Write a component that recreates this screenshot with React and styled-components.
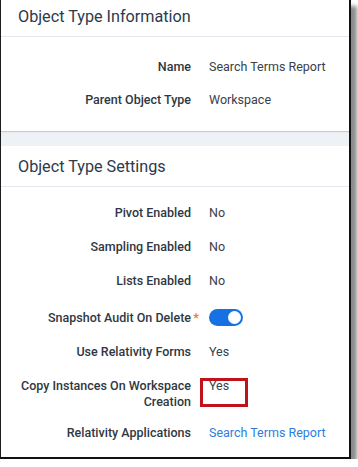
import React from "react";
import styled, { createGlobalStyle } from "styled-components";

const Global = createGlobalStyle`
    body {
        margin: 0;
        background: #ffffff;
        font-family: Roboto, "Liberation Sans", sans-serif;
    }
`;

const Frame = styled.div`
    width: 348px;
    height: 457px;
    display: flex;
    flex-direction: column;
    background: #eef2f6;
    border-left: 1px solid #1c1c1c;
    border-right: 2px solid #111;
    border-bottom: 2px solid #111;
    box-shadow: 6px 6px 4px rgba(0, 0, 0, 0.45);
    overflow: hidden;
`;

const Card = styled.section`
    background: #ffffff;
    display: flex;
    flex-direction: column;
    flex: ${(p) => (p.$grow ? 1 : "none")};
    margin-top: ${(p) => p.$gap || 0}px;
    box-shadow: 0 1px 1px rgba(120, 135, 155, 0.35);
`;

const Header = styled.h2`
    margin: 0;
    height: ${(p) => p.$h}px;
    line-height: ${(p) => p.$h - (p.$lift || 0) * 2}px;
    padding: 0 17px ${(p) => (p.$lift || 0) * 2}px;
    box-sizing: border-box;
    border-bottom: 1px solid #e3e8ee;
    font-size: 16.2px;
    font-weight: 400;
    color: #2d3a4c;
`;

const Fields = styled.div`
    display: flex;
    flex-direction: column;
    gap: ${(p) => p.$gap}px;
    padding: ${(p) => p.$pad};
`;

const Row = styled.div`
    display: grid;
    grid-template-columns: 178px 1fr;
    column-gap: 18px;
    align-items: start;
    padding: 8px 0 ${(p) => (p.$tight ? 5 : 8)}px 12px;
    font-size: 12.5px;
    line-height: 16px;
`;

const Label = styled.div`
    position: relative;
    text-align: right;
    font-weight: 500;
    color: #2f3842;
    padding-top: ${(p) => p.$offset || 0}px;
`;

const Required = styled.span`
    position: absolute;
    right: -8px;
    top: ${(p) => p.$offset || 0}px;
    color: #f07b1a;
    font-weight: 700;
`;

const Value = styled.div`
    position: relative;
    color: #39414a;
`;

const Link = styled.a`
    color: #2c7de0;
    text-decoration: none;
`;

const Highlight = styled.span`
    position: absolute;
    left: -9px;
    top: 0;
    width: 48px;
    height: 29px;
    box-sizing: border-box;
    border: 3px solid #c0121b;
`;

const Toggle = styled.div`
    margin-top: 2px;
    width: 34px;
    height: 17px;
    border-radius: 9px;
    background: #1671e2;
    position: relative;
    &::after {
        content: "";
        position: absolute;
        right: 2px;
        top: 2px;
        width: 13px;
        height: 13px;
        border-radius: 50%;
        background: #fff;
    }
`;

export default function App() {
    return (
        <>
            <Global />
            <Frame>
                <Card>
                    <Header $h={37} $lift={2}>Object Type Information</Header>
                    <Fields $gap={1} $pad="14px 0 15px">
                        <Row>
                            <Label>Name</Label>
                            <Value>Search Terms Report</Value>
                        </Row>
                        <Row>
                            <Label>Parent Object Type</Label>
                            <Value>Workspace</Value>
                        </Row>
                    </Fields>
                </Card>
                <Card $gap={15} $grow>
                    <Header $h={41}>Object Type Settings</Header>
                    <Fields $gap={2} $pad="10px 0 0">
                        <Row>
                            <Label>Pivot Enabled</Label>
                            <Value>No</Value>
                        </Row>
                        <Row>
                            <Label>Sampling Enabled</Label>
                            <Value>No</Value>
                        </Row>
                        <Row>
                            <Label>Lists Enabled</Label>
                            <Value>No</Value>
                        </Row>
                        <Row>
                            <Label $offset={3}>
                                Snapshot Audit On Delete
                                <Required $offset={3}>*</Required>
                            </Label>
                            <Toggle />
                        </Row>
                        <Row>
                            <Label>Use Relativity Forms</Label>
                            <Value>Yes</Value>
                        </Row>
                        <Row $tight>
                            <Label>Copy Instances On Workspace Creation</Label>
                            <Value>
                                Yes
                                <Highlight />
                            </Value>
                        </Row>
                        <Row>
                            <Label>Relativity Applications</Label>
                            <Value>
                                <Link href="#">Search Terms Report</Link>
                            </Value>
                        </Row>
                    </Fields>
                </Card>
            </Frame>
        </>
    );
}
